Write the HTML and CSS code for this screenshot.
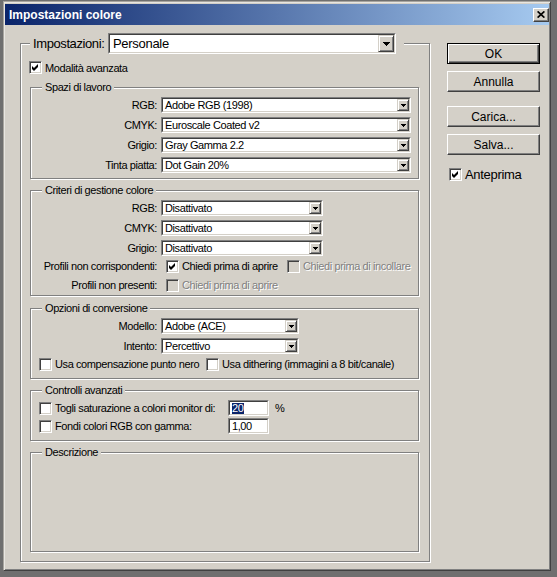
FILE: index.html
```html
<!DOCTYPE html>
<html lang="it">
<head>
<meta charset="utf-8">
<title>Impostazioni colore</title>
<link rel="stylesheet" href="styles.css">
</head>
<body>
<div class="window">
  <div class="titlebar">
    <span class="title">Impostazioni colore</span>
    <span class="close"><svg width="8" height="7" viewBox="0 0 8 7"><path d="M0.6 0.4 L7.4 6.6 M7.4 0.4 L0.6 6.6" stroke="#000" stroke-width="1.7" fill="none"/></svg></span>
  </div>
  <div class="content">
    <fieldset class="main">
      <legend class="main-legend">
        <span class="legend-row">
          <span class="big-label">Impostazioni:</span>
          <span class="select big w288"><span class="sel-in"><span class="val">Personale</span><span class="arrow"><svg width="7" height="4" viewBox="0 0 7 4"><path d="M0 0h7v1h-1v1h-1v1h-1v1h-1v-1h-1v-1h-1v-1h-1z"/></svg></span></span></span>
        </span>
      </legend>
      <div class="check-row adv"><span class="cb checked"><svg width="7" height="7" viewBox="0 0 7 7"><path d="M0 2L2 4L6 0V3L2 7L0 5Z"/></svg></span><span>Modalità avanzata</span></div>

      <fieldset class="group spazi">
        <legend>Spazi di lavoro</legend>
        <div class="form-grid">
          <span class="lbl">RGB:</span>
          <span class="select w250"><span class="sel-in"><span class="val">Adobe RGB (1998)</span><span class="arrow"><svg width="5" height="3" viewBox="0 0 5 3"><path d="M0 0h5v1h-1v1h-1v1h-1v-1h-1v-1h-1z"/></svg></span></span></span>
          <span class="lbl">CMYK:</span>
          <span class="select w250"><span class="sel-in"><span class="val">Euroscale Coated v2</span><span class="arrow"><svg width="5" height="3" viewBox="0 0 5 3"><path d="M0 0h5v1h-1v1h-1v1h-1v-1h-1v-1h-1z"/></svg></span></span></span>
          <span class="lbl">Grigio:</span>
          <span class="select w250"><span class="sel-in"><span class="val">Gray Gamma 2.2</span><span class="arrow"><svg width="5" height="3" viewBox="0 0 5 3"><path d="M0 0h5v1h-1v1h-1v1h-1v-1h-1v-1h-1z"/></svg></span></span></span>
          <span class="lbl">Tinta piatta:</span>
          <span class="select w250"><span class="sel-in"><span class="val">Dot Gain 20%</span><span class="arrow"><svg width="5" height="3" viewBox="0 0 5 3"><path d="M0 0h5v1h-1v1h-1v1h-1v-1h-1v-1h-1z"/></svg></span></span></span>
        </div>
      </fieldset>

      <fieldset class="group criteri">
        <legend>Criteri di gestione colore</legend>
        <div class="form-grid">
          <span class="lbl">RGB:</span>
          <span class="select w162"><span class="sel-in"><span class="val">Disattivato</span><span class="arrow"><svg width="5" height="3" viewBox="0 0 5 3"><path d="M0 0h5v1h-1v1h-1v1h-1v-1h-1v-1h-1z"/></svg></span></span></span>
          <span class="lbl">CMYK:</span>
          <span class="select w162"><span class="sel-in"><span class="val">Disattivato</span><span class="arrow"><svg width="5" height="3" viewBox="0 0 5 3"><path d="M0 0h5v1h-1v1h-1v1h-1v-1h-1v-1h-1z"/></svg></span></span></span>
          <span class="lbl">Grigio:</span>
          <span class="select w162"><span class="sel-in"><span class="val">Disattivato</span><span class="arrow"><svg width="5" height="3" viewBox="0 0 5 3"><path d="M0 0h5v1h-1v1h-1v1h-1v-1h-1v-1h-1z"/></svg></span></span></span>
        </div>
        <div class="form-grid checks">
          <span class="lbl">Profili non corrispondenti:</span>
          <span class="opts">
            <span class="opt w121"><span class="cb checked"><svg width="7" height="7" viewBox="0 0 7 7"><path d="M0 2L2 4L6 0V3L2 7L0 5Z"/></svg></span><span>Chiedi prima di aprire</span></span>
            <span class="opt disabled"><span class="cb"></span><span>Chiedi prima di incollare</span></span>
          </span>
          <span class="lbl">Profili non presenti:</span>
          <span class="opts">
            <span class="opt disabled"><span class="cb"></span><span>Chiedi prima di aprire</span></span>
          </span>
        </div>
      </fieldset>

      <fieldset class="group opzioni">
        <legend>Opzioni di conversione</legend>
        <div class="form-grid">
          <span class="lbl">Modello:</span>
          <span class="select w138"><span class="sel-in"><span class="val">Adobe (ACE)</span><span class="arrow"><svg width="5" height="3" viewBox="0 0 5 3"><path d="M0 0h5v1h-1v1h-1v1h-1v-1h-1v-1h-1z"/></svg></span></span></span>
          <span class="lbl">Intento:</span>
          <span class="select w138"><span class="sel-in"><span class="val">Percettivo</span><span class="arrow"><svg width="5" height="3" viewBox="0 0 5 3"><path d="M0 0h5v1h-1v1h-1v1h-1v-1h-1v-1h-1z"/></svg></span></span></span>
        </div>
        <div class="opts conv">
          <span class="opt w167"><span class="cb"></span><span>Usa compensazione punto nero</span></span>
          <span class="opt"><span class="cb"></span><span>Usa dithering (immagini a 8 bit/canale)</span></span>
        </div>
      </fieldset>

      <fieldset class="group controlli">
        <legend>Controlli avanzati</legend>
        <div class="ctl-row">
          <span class="opt w189"><span class="cb"></span><span>Togli saturazione a colori monitor di:</span></span>
          <span class="field"><span class="sel-in"><span class="hl">20</span></span></span>
          <span class="unit">%</span>
        </div>
        <div class="ctl-row">
          <span class="opt w189"><span class="cb"></span><span>Fondi colori RGB con gamma:</span></span>
          <span class="field"><span class="sel-in"><span class="txt">1,00</span></span></span>
        </div>
      </fieldset>

      <fieldset class="group descr">
        <legend>Descrizione</legend>
        <div class="descr-body"></div>
      </fieldset>
    </fieldset>

    <div class="side">
      <span class="btn default">OK</span>
      <span class="btn gap-s">Annulla</span>
      <span class="btn gap-l">Carica...</span>
      <span class="btn gap-s">Salva...</span>
      <div class="check-row preview"><span class="cb checked"><svg width="7" height="7" viewBox="0 0 7 7"><path d="M0 2L2 4L6 0V3L2 7L0 5Z"/></svg></span><span>Anteprima</span></div>
    </div>
  </div>
</div>
</body>
</html>
```

FILE: styles.css
```css
* { box-sizing: border-box; }

body {
  margin: 0;
  background: #6f6f6f;
  font-family: "Liberation Sans", Arial, sans-serif;
  font-size: 11px;
  letter-spacing: -0.4px;
  color: #000;
}

.window {
  margin: 1px 0 0 3px;
  width: 548px;
  height: 570px;
  background: #d4d0c8;
  border: 1px solid;
  border-color: #a8a59f #404040 #404040 #a8a59f;
  box-shadow: inset 1px 1px #e8e6e1, inset -1px -1px #808080;
  padding: 2px 1px 1px 1px;
}

.titlebar {
  height: 21px;
  display: flex;
  align-items: center;
  justify-content: space-between;
  padding: 0 0 0 4px;
  background: linear-gradient(to right, #0a246a, #a6caf0);
}

.title {
  color: #fff;
  font-weight: bold;
  font-size: 12px;
  letter-spacing: 0;
}

.close {
  width: 16px;
  height: 14px;
  background: #d4d0c8;
  border: 1px solid;
  border-color: #fff #404040 #404040 #fff;
  box-shadow: inset -1px -1px #808080;
  display: flex;
  align-items: center;
  justify-content: center;
}

.content {
  display: flex;
  align-items: flex-start;
  padding: 8px 0 0 15px;
}

/* group boxes */
fieldset {
  margin: 0;
  min-width: 0;
  border: 1px solid #808080;
  box-shadow: inset 1px 1px #fff, 1px 1px #fff;
}

legend {
  background: #d4d0c8;
}

.main {
  width: 410px;
  padding: 0 10px 9px 9px;
}

.main-legend {
  padding: 0 8px 0 3px;
  height: 21px;
}

.legend-row {
  display: flex;
  align-items: center;
  height: 21px;
}

.big-label {
  width: 75px;
  font-size: 13px;
  letter-spacing: -0.4px;
}

.group {
  padding: 3px 0 5px 0;
  margin-top: 4px;
}

.group legend {
  margin-left: 11px;
  padding: 0 3px;
  height: 14px;
  line-height: 14px;
}

.group.spazi { margin-top: 6px; }
.group.criteri { padding-bottom: 2px; }
.group.opzioni { margin-top: 5px; padding-bottom: 6px; }
.group.controlli { padding-bottom: 6px; }
.group.descr { padding-bottom: 0; }

.descr-body { height: 89px; }

/* rows */
.check-row {
  display: flex;
  align-items: center;
  gap: 3px;
  height: 13px;
}

.check-row.adv {
  margin-top: 7px;
  margin-left: -1px;
}

.form-grid {
  display: grid;
  grid-template-columns: 126px auto;
  column-gap: 4px;
  row-gap: 4px;
  grid-auto-rows: 16px;
  align-items: center;
  justify-items: start;
}

.form-grid.checks {
  row-gap: 3px;
  margin-top: 2px;
}

.lbl { justify-self: end; }

.opts {
  display: flex;
  align-items: center;
  height: 16px;
}

.form-grid .opts { margin-left: 5px; }

.opts.conv {
  margin-top: 2px;
  padding-left: 8px;
}

.opt {
  display: flex;
  align-items: center;
  gap: 3px;
  flex: none;
}

.w121 { width: 121px; }
.w167 { width: 167px; }
.w189 { width: 189px; }

.opt.disabled {
  color: #808080;
  text-shadow: 1px 1px 0 #fff;
}

.opt.disabled .cb { background: #d4d0c8; }

.ctl-row {
  display: flex;
  align-items: center;
  height: 16px;
  padding-left: 8px;
}

.ctl-row + .ctl-row { margin-top: 2px; }

.unit { margin-left: 6px; }

/* checkbox */
.cb {
  width: 13px;
  height: 13px;
  flex: none;
  background: #fff;
  border: 1px solid;
  border-color: #808080 #fff #fff #808080;
  box-shadow: inset 1px 1px #404040, inset -1px -1px #d4d0c8;
  display: flex;
  align-items: center;
  justify-content: center;
}

.cb svg { display: block; }

/* combo boxes */
.select, .field {
  display: block;
  height: 16px;
  border: 1px solid;
  border-color: #808080 #fff #fff #808080;
  background: #fff;
}

.sel-in {
  display: flex;
  align-items: center;
  height: 100%;
  border: 1px solid;
  border-color: #404040 #d4d0c8 #d4d0c8 #404040;
}

.val {
  flex: 1;
  padding-left: 2px;
  white-space: nowrap;
  overflow: hidden;
  line-height: 12px;
}

.arrow {
  width: 12px;
  height: 12px;
  flex: none;
  background: #d4d0c8;
  border: 1px solid;
  border-color: #d4d0c8 #404040 #404040 #d4d0c8;
  box-shadow: inset 1px 1px #fff, inset -1px -1px #808080;
  display: flex;
  align-items: center;
  justify-content: center;
}

.arrow svg { display: block; }

.w250 { width: 250px; }
.w162 { width: 162px; }
.w138 { width: 138px; }
.w288 { width: 288px; }

.select.big { height: 21px; }
.select.big .val {
  font-size: 13px;
  letter-spacing: -0.3px;
  line-height: 17px;
  padding-left: 3px;
}
.select.big .arrow {
  width: 16px;
  height: 17px;
}

.field { width: 41px; }
.hl {
  margin-left: 2px;
  background: #0a246a;
  color: #fff;
  line-height: 11px;
  padding: 0 1px 0 0;
}
.txt { padding-left: 2px; line-height: 12px; }

/* side buttons */
.side {
  margin-left: 17px;
  padding-top: 10px;
  width: 93px;
  display: flex;
  flex-direction: column;
}

.btn {
  display: flex;
  align-items: center;
  justify-content: center;
  height: 21px;
  font-size: 12px;
  letter-spacing: 0;
  background: #d4d0c8;
  border: 1px solid;
  border-color: #fff #404040 #404040 #fff;
  box-shadow: inset -1px -1px #808080;
}

.btn.default {
  border-color: #000;
  box-shadow: inset 1px 1px #fff, inset -1px -1px #404040, inset -2px -2px #808080;
}

.gap-s { margin-top: 7px; }
.gap-l { margin-top: 14px; }

.check-row.preview {
  margin-top: 12px;
  margin-left: 2px;
  height: 15px;
  font-size: 13px;
  letter-spacing: -0.3px;
}
```
